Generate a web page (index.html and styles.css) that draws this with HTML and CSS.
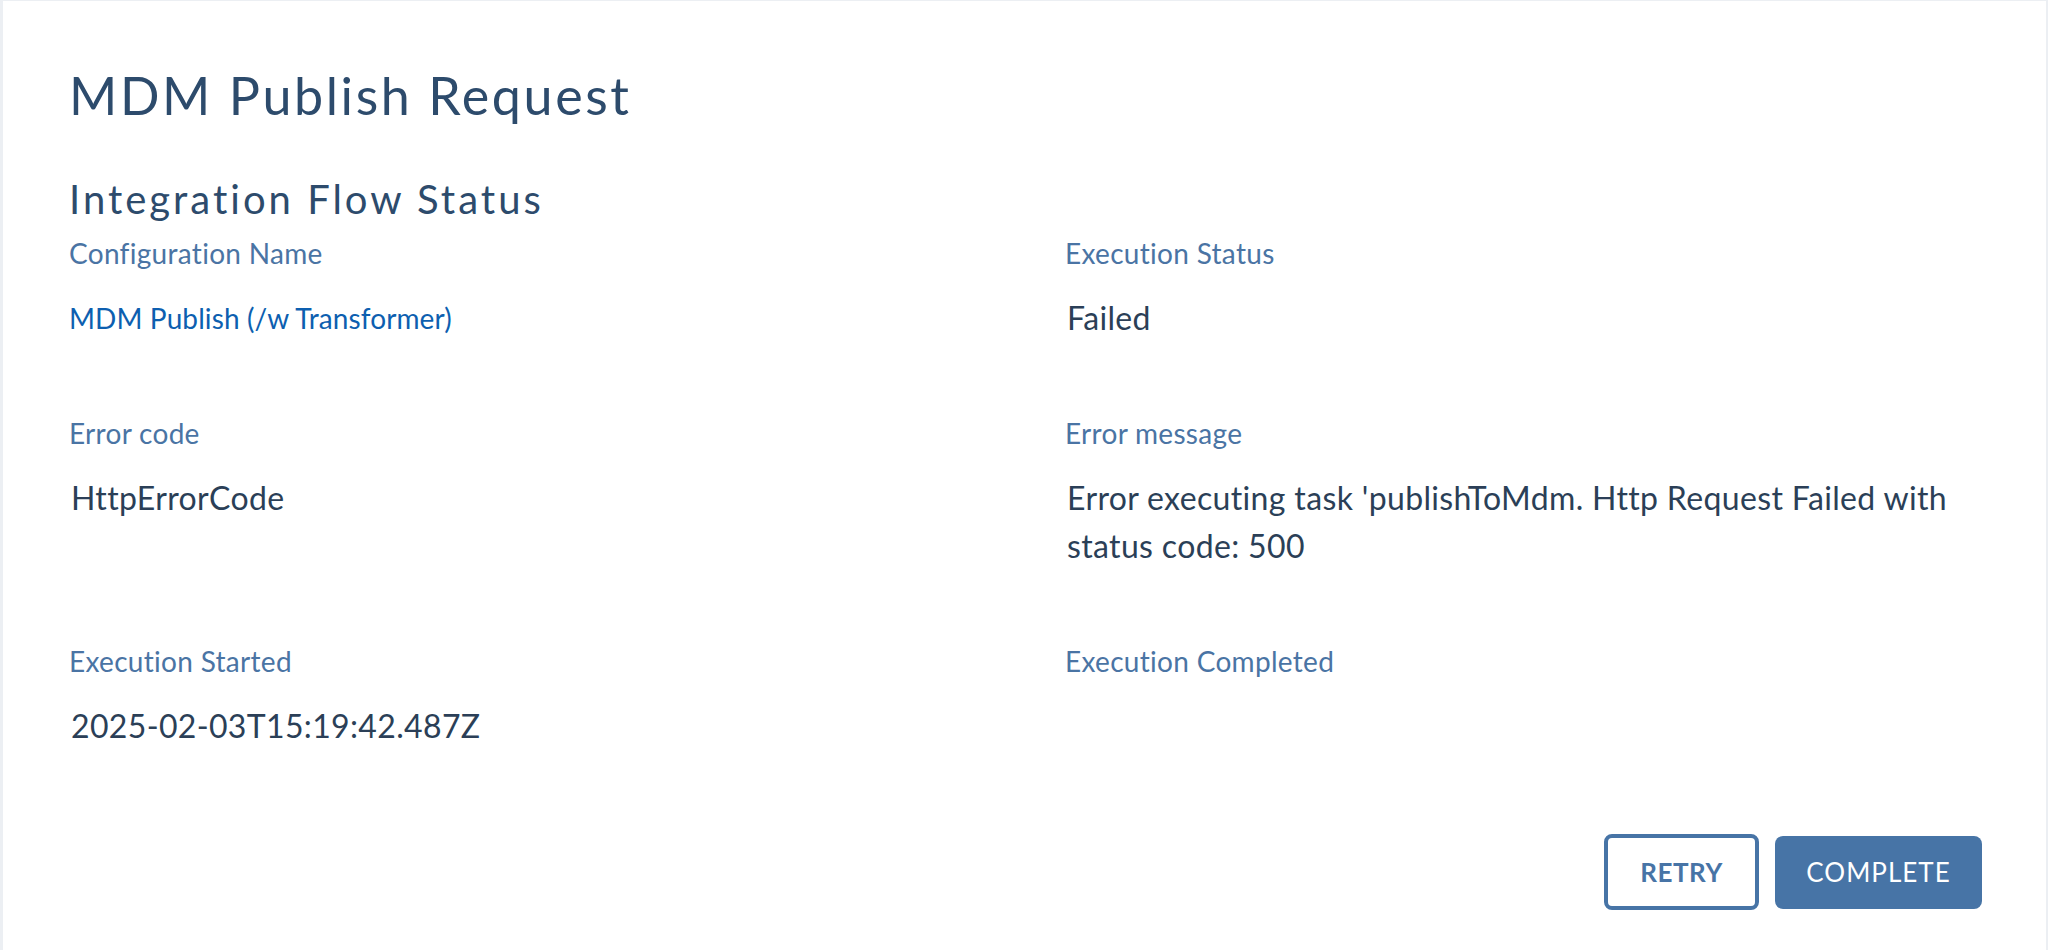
FILE: index.html
```html
<!DOCTYPE html>
<html lang="en">
<head>
<meta charset="utf-8">
<title>MDM Publish Request</title>
<link rel="stylesheet" href="styles.css">
</head>
<body>
<main class="card">
  <h1 class="title">MDM Publish Request</h1>
  <h2 class="subtitle">Integration Flow Status</h2>
  <section class="grid">
    <div class="field">
      <div class="label">Configuration Name</div>
      <a class="value link" href="#">MDM Publish (/w Transformer)</a>
    </div>
    <div class="field">
      <div class="label">Execution Status</div>
      <div class="value">Failed</div>
    </div>
    <div class="field">
      <div class="label">Error code</div>
      <div class="value">HttpErrorCode</div>
    </div>
    <div class="field">
      <div class="label">Error message</div>
      <div class="value">Error executing task 'publishToMdm. Http Request Failed with status code: 500</div>
    </div>
    <div class="field">
      <div class="label">Execution Started</div>
      <div class="value">2025-02-03T15:19:42.487Z</div>
    </div>
    <div class="field">
      <div class="label">Execution Completed</div>
      <div class="value"></div>
    </div>
  </section>
  <div class="actions">
    <button class="btn btn-outline" type="button">RETRY</button>
    <button class="btn btn-primary" type="button">COMPLETE</button>
  </div>
</main>
</body>
</html>
```
FILE: styles.css
```css
html, body {
  margin: 0;
  padding: 0;
  height: 100%;
}
body {
  background: #eceff3;
  font-family: "Lato", "Noto Sans", sans-serif;
  padding: 1px 2px 0 3px;
  box-sizing: border-box;
  overflow: hidden;
}
.card {
  background: #ffffff;
  min-height: 949px;
  box-sizing: border-box;
  padding: 63px 64px 40px 66px;
}
.title {
  margin: 0;
  font-family: "Lato", sans-serif;
  font-weight: 400;
  font-size: 52px;
  line-height: 62px;
  letter-spacing: 2.6px;
  color: #2d4b6c;
}
.subtitle {
  margin: 49px 0 0 0;
  font-family: "Lato", sans-serif;
  font-weight: 400;
  font-size: 40px;
  line-height: 48px;
  letter-spacing: 3px;
  color: #2d4b6c;
}
.grid {
  margin-top: 12px;
  display: grid;
  grid-template-columns: 1fr 1fr;
  column-gap: 79px;
}
.field {
  display: flex;
  flex-direction: column;
  align-items: flex-start;
  padding-bottom: 73px;
}
.label {
  font-size: 28px;
  line-height: 36px;
  letter-spacing: 0.3px;
  color: #4a74a4;
}
.value {
  margin-top: 23px;
  font-size: 32px;
  line-height: 48px;
  min-height: 48px;
  letter-spacing: 0.35px;
  color: #2b3f57;
  padding-left: 2px;
}
.link {
  color: #0d5fb0;
  text-decoration: none;
  font-size: 28px;
  letter-spacing: 0.1px;
  padding-left: 0;
}
.actions {
  margin-top: 11px;
  display: flex;
  justify-content: flex-end;
  align-items: center;
  gap: 16px;
}
.btn {
  font-family: "Lato", sans-serif;
  font-size: 26px;
  letter-spacing: 0.5px;
  border-radius: 8px;
  box-sizing: border-box;
  cursor: pointer;
}
.btn-outline {
  width: 155px;
  height: 76px;
  background: #ffffff;
  border: 4px solid #4774a6;
  color: #4774a6;
  font-weight: 700;
}
.btn-primary {
  width: 207px;
  height: 73px;
  background: #4774a6;
  border: none;
  color: #ffffff;
  font-weight: 400;
  letter-spacing: 1px;
}
```
